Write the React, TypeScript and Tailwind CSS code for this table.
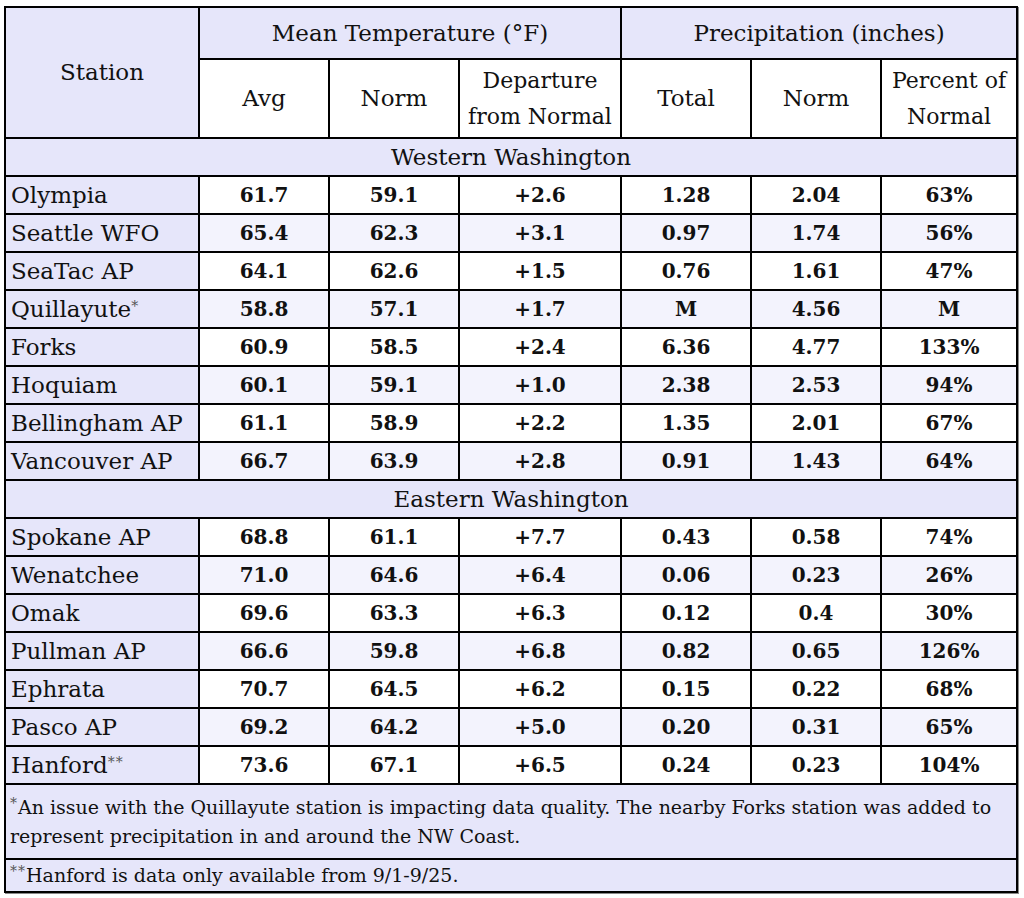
import React from "react";

type Row = {
  station: string;
  mark?: string;
  avg: string;
  norm: string;
  dep: string;
  total: string;
  pnorm: string;
  pct: string;
};

const western: Row[] = [
  { station: "Olympia", avg: "61.7", norm: "59.1", dep: "+2.6", total: "1.28", pnorm: "2.04", pct: "63%" },
  { station: "Seattle WFO", avg: "65.4", norm: "62.3", dep: "+3.1", total: "0.97", pnorm: "1.74", pct: "56%" },
  { station: "SeaTac AP", avg: "64.1", norm: "62.6", dep: "+1.5", total: "0.76", pnorm: "1.61", pct: "47%" },
  { station: "Quillayute", mark: "*", avg: "58.8", norm: "57.1", dep: "+1.7", total: "M", pnorm: "4.56", pct: "M" },
  { station: "Forks", avg: "60.9", norm: "58.5", dep: "+2.4", total: "6.36", pnorm: "4.77", pct: "133%" },
  { station: "Hoquiam", avg: "60.1", norm: "59.1", dep: "+1.0", total: "2.38", pnorm: "2.53", pct: "94%" },
  { station: "Bellingham AP", avg: "61.1", norm: "58.9", dep: "+2.2", total: "1.35", pnorm: "2.01", pct: "67%" },
  { station: "Vancouver AP", avg: "66.7", norm: "63.9", dep: "+2.8", total: "0.91", pnorm: "1.43", pct: "64%" },
];

const eastern: Row[] = [
  { station: "Spokane AP", avg: "68.8", norm: "61.1", dep: "+7.7", total: "0.43", pnorm: "0.58", pct: "74%" },
  { station: "Wenatchee", avg: "71.0", norm: "64.6", dep: "+6.4", total: "0.06", pnorm: "0.23", pct: "26%" },
  { station: "Omak", avg: "69.6", norm: "63.3", dep: "+6.3", total: "0.12", pnorm: "0.4", pct: "30%" },
  { station: "Pullman AP", avg: "66.6", norm: "59.8", dep: "+6.8", total: "0.82", pnorm: "0.65", pct: "126%" },
  { station: "Ephrata", avg: "70.7", norm: "64.5", dep: "+6.2", total: "0.15", pnorm: "0.22", pct: "68%" },
  { station: "Pasco AP", avg: "69.2", norm: "64.2", dep: "+5.0", total: "0.20", pnorm: "0.31", pct: "65%" },
  { station: "Hanford", mark: "**", avg: "73.6", norm: "67.1", dep: "+6.5", total: "0.24", pnorm: "0.23", pct: "104%" },
];

// small raised asterisks used for the footnote marks
const Mark = ({ text }: { text: string }) => (
  <span className="relative -top-[6px] text-[14px] tracking-[1px] text-[#555]">{text}</span>
);

const StationRows = ({ rows }: { rows: Row[] }) => (
  <>
    {rows.map((r, i) => {
      const bg = i % 2 === 1 ? "bg-[#f3f3fd]" : "bg-white";
      const num = `border-2 border-black text-center font-bold text-[20px] ${bg}`;
      return (
        <tr key={r.station} className="h-[38px]">
          <td className="border-2 border-black bg-[#e6e6fa] pl-[5px] text-left">
            {r.station}
            {r.mark && <Mark text={r.mark} />}
          </td>
          <td className={num}>{r.avg}</td>
          <td className={num}>{r.norm}</td>
          <td className={num}>{r.dep}</td>
          <td className={num}>{r.total}</td>
          <td className={num}>{r.pnorm}</td>
          <td className={num}>{r.pct}</td>
        </tr>
      );
    })}
  </>
);

export default function App() {
  return (
    <div className="min-h-[898px] w-[1024px] bg-white pl-[4px] pt-[6px] font-['DejaVu_Serif','Liberation_Serif',serif] text-[23px] text-[#111]">
      <table className="w-[1012px] table-fixed border-collapse border-2 border-black shadow-[1px_1px_0_#888]">
        <colgroup>
          <col className="w-[194px]" />
          <col className="w-[130px]" />
          <col className="w-[130px]" />
          <col className="w-[162px]" />
          <col className="w-[130px]" />
          <col className="w-[130px]" />
          <col className="w-[136px]" />
        </colgroup>
        <thead>
          <tr className="h-[52px] bg-[#e6e6fa]">
            <th rowSpan={2} className="border-2 border-black font-normal">
              Station
            </th>
            <th colSpan={3} className="border-2 border-black font-normal">
              Mean Temperature (°F)
            </th>
            <th colSpan={3} className="border-2 border-black font-normal">
              Precipitation (inches)
            </th>
          </tr>
          <tr className="h-[79px] bg-white">
            <th className="border-2 border-black font-normal">Avg</th>
            <th className="border-2 border-black font-normal">Norm</th>
            <th className="border-2 border-black text-[22px] font-normal leading-[36px]">
              Departure
              <br />
              from Normal
            </th>
            <th className="border-2 border-black font-normal">Total</th>
            <th className="border-2 border-black font-normal">Norm</th>
            <th className="border-2 border-black text-[22px] font-normal leading-[36px]">
              Percent of
              <br />
              Normal
            </th>
          </tr>
        </thead>
        <tbody>
          <tr className="h-[38px] bg-[#e6e6fa]">
            <td colSpan={7} className="border-2 border-black text-center">
              Western Washington
            </td>
          </tr>
          <StationRows rows={western} />
          <tr className="h-[38px] bg-[#e6e6fa]">
            <td colSpan={7} className="border-2 border-black text-center">
              Eastern Washington
            </td>
          </tr>
          <StationRows rows={eastern} />
          <tr className="h-[75px] bg-[#e6e6fa]">
            <td colSpan={7} className="border-2 border-black px-[4px] text-[19px] leading-[27px] whitespace-nowrap">
              <Mark text="*" />
              An issue with the Quillayute station is impacting data quality. The nearby Forks station was added to
              <br />
              represent precipitation in and around the NW Coast.
            </td>
          </tr>
          <tr className="h-[33px] bg-[#e6e6fa]">
            <td colSpan={7} className="border-2 border-black px-[4px] text-[19px] whitespace-nowrap">
              <Mark text="**" />
              Hanford is data only available from 9/1-9/25.
            </td>
          </tr>
        </tbody>
      </table>
    </div>
  );
}
